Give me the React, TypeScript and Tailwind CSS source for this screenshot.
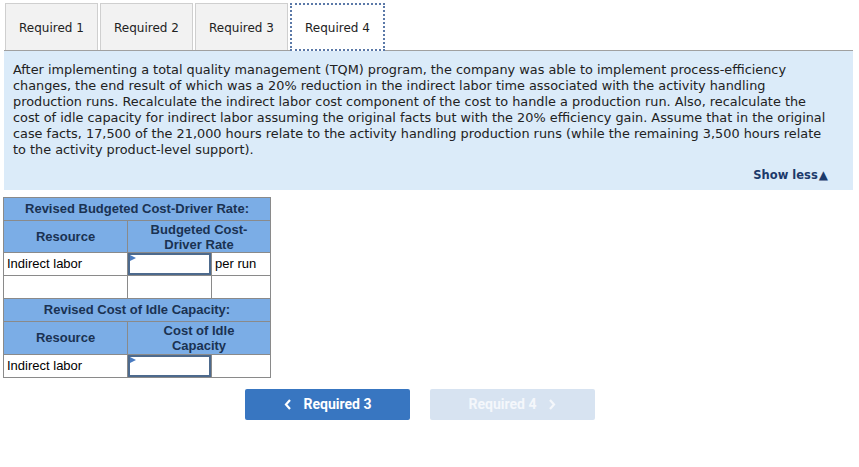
import React from "react";

const lines = [
  "After implementing a total quality management (TQM) program, the company was able to implement process-efficiency",
  "changes, the end result of which was a 20% reduction in the indirect labor time associated with the activity handling",
  "production runs. Recalculate the indirect labor cost component of the cost to handle a production run. Also, recalculate the",
  "cost of idle capacity for indirect labor assuming the original facts but with the 20% efficiency gain. Assume that in the original",
  "case facts, 17,500 of the 21,000 hours relate to the activity handling production runs (while the remaining 3,500 hours relate",
  "to the activity product-level support).",
];

function Tab({ label, active }: { label: string; active?: boolean }) {
  if (active) {
    return (
      <div className="relative z-10 -mb-px flex h-[48px] w-[95px] items-center justify-center border-2 border-dotted border-[#5b79a8] bg-white pt-[2px] text-[12px] text-[#222]">
        {label}
      </div>
    );
  }
  return (
    <div className="flex h-[47px] w-[93px] items-center justify-center border border-[#cfcfcf] border-b-0 bg-[#f2f2f2] pt-[2px] text-[12px] text-[#222]">
      {label}
    </div>
  );
}

function InputCell() {
  return (
    <td className="relative border border-[#8a8a8a] p-0">
      <div className="relative h-[22px] w-full border-2 border-[#4d6a8d] bg-white">
        <svg className="absolute left-0 top-0" width="6" height="6" viewBox="0 0 6 6">
          <polygon points="0,0 6,3 0,6" fill="#4a7bc0" />
        </svg>
      </div>
    </td>
  );
}

export default function App() {
  const head = "border border-[#8a8a8a] bg-[#7badE6] text-center font-bold text-[#1a3252]";
  const cell = "border border-[#8a8a8a] bg-white";
  return (
    <div className="h-[467px] w-[859px] bg-white" style={{ fontFamily: "'DejaVu Sans', Verdana, sans-serif" }}>
      <div className="flex items-end gap-[2px] pl-[5px] pt-[3px]">
        <Tab label="Required 1" />
        <Tab label="Required 2" />
        <Tab label="Required 3" />
        <Tab label="Required 4" active />
      </div>
      <div className="ml-[4px] box-border h-[140px] w-[849px] border-t border-[#a0a0a0] bg-[#dbebf9] pl-[9px] pr-[25px] pt-[11px] text-[12.85px] leading-[16px] text-[#222]">
        {lines.map((l) => (
          <div key={l} className="whitespace-nowrap">{l}</div>
        ))}
        <div className="mt-[10px] flex items-center justify-end text-[11.5px] font-bold leading-[14px] text-[#1c3a6b]">
          Show less<span className="ml-[1px] text-[12px]">▲</span>
        </div>
      </div>

      <table
        className="ml-[3px] mt-[7px] border-collapse text-[13px]"
        style={{ fontFamily: "'Liberation Sans', Arial, sans-serif" }}
      >
        <colgroup>
          <col className="w-[124px]" />
          <col className="w-[84px]" />
          <col className="w-[59px]" />
        </colgroup>
        <tbody>
          <tr className="h-[23px]">
            <td colSpan={3} className={head}>Revised Budgeted Cost-Driver Rate:</td>
          </tr>
          <tr className="h-[32px]">
            <td className={head}>Resource</td>
            <td colSpan={2} className={`${head} leading-[15px]`}>Budgeted Cost-<br />Driver Rate</td>
          </tr>
          <tr className="h-[23px]">
            <td className={`${cell} pl-[3px] text-black`}>Indirect labor</td>
            <InputCell />
            <td className={`${cell} pl-[3px] text-black`}>per run</td>
          </tr>
          <tr className="h-[23px]">
            <td className={cell}></td>
            <td className={cell}></td>
            <td className={cell}></td>
          </tr>
          <tr className="h-[23px]">
            <td colSpan={3} className={head}>Revised Cost of Idle Capacity:</td>
          </tr>
          <tr className="h-[33px]">
            <td className={head}>Resource</td>
            <td colSpan={2} className={`${head} leading-[15px]`}>Cost of Idle<br />Capacity</td>
          </tr>
          <tr className="h-[23px]">
            <td className={`${cell} pl-[3px] text-black`}>Indirect labor</td>
            <InputCell />
            <td className={cell}></td>
          </tr>
        </tbody>
      </table>

      <div className="mt-[11px] flex gap-[20px] pl-[245px]" style={{ fontFamily: "Roboto, sans-serif" }}>
        <button className="flex h-[31px] w-[165px] items-center justify-center gap-[12px] rounded-[2px] bg-[#3876c1] text-[14px] font-bold text-white">
          <svg width="8" height="11" viewBox="0 0 8 11"><polyline points="6,1 2,5.5 6,10" fill="none" stroke="white" strokeWidth="2.2" /></svg>
          Required 3
        </button>
        <button className="flex h-[31px] w-[165px] items-center justify-center gap-[12px] rounded-[2px] bg-[#d7e3f1] text-[14px] font-bold text-[#f4f7fb]">
          Required 4
          <svg width="8" height="11" viewBox="0 0 8 11"><polyline points="2,1 6,5.5 2,10" fill="none" stroke="#f4f7fb" strokeWidth="2.2" /></svg>
        </button>
      </div>
    </div>
  );
}
